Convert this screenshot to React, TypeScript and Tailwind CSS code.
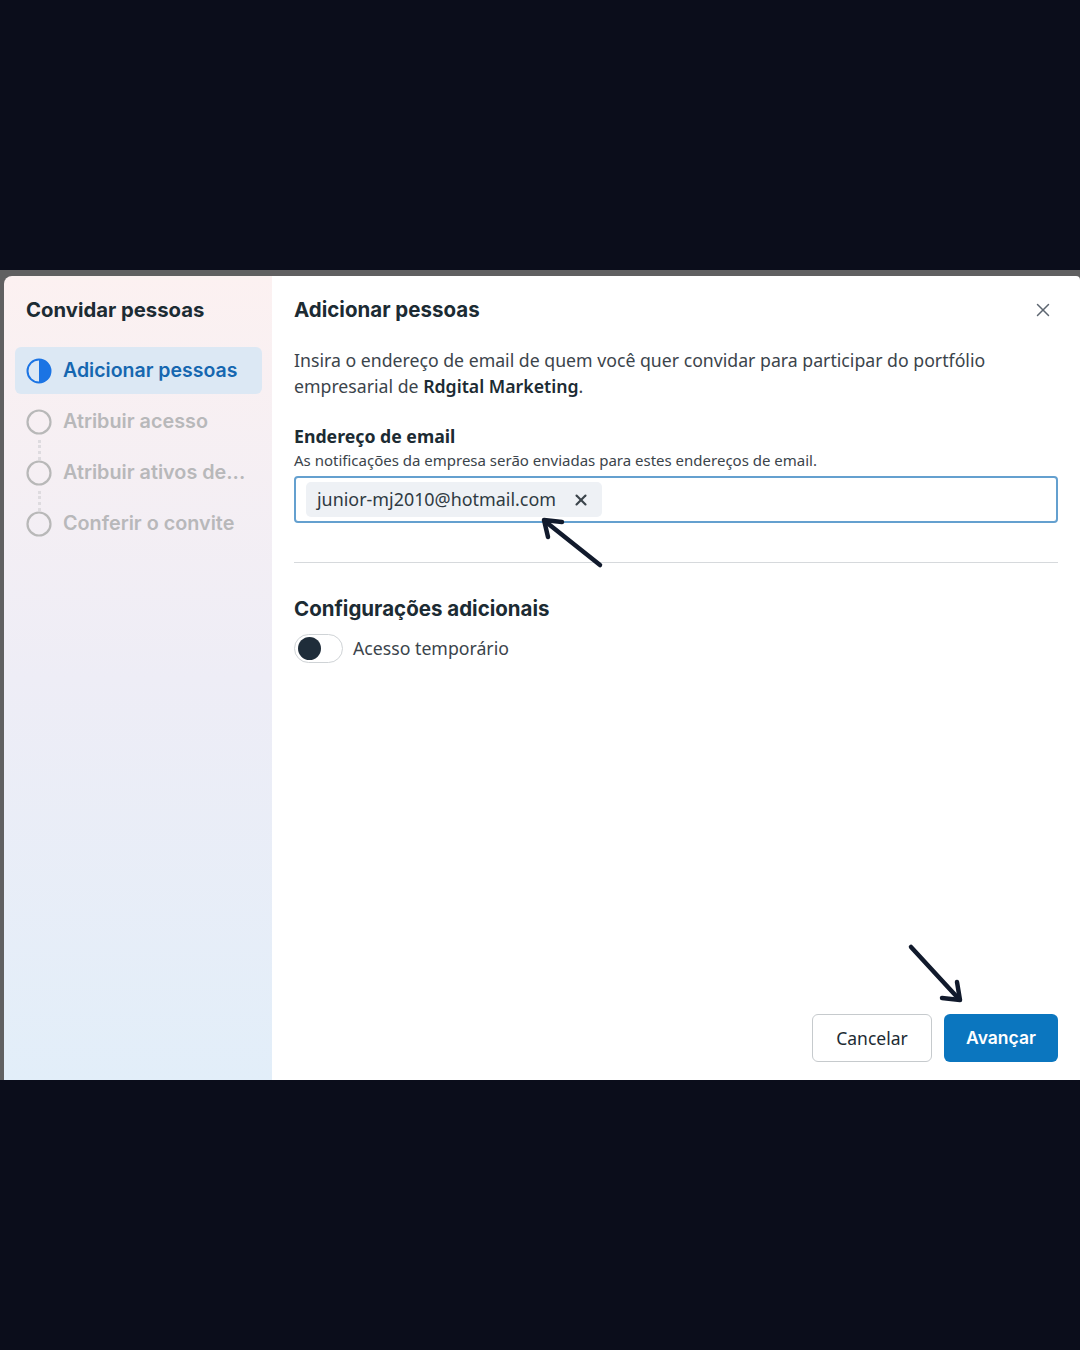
import { X } from "lucide-react"

const steps = [
  { label: "Adicionar pessoas", active: true },
  { label: "Atribuir acesso", active: false },
  { label: "Atribuir ativos de...", active: false },
  { label: "Conferir o convite", active: false },
]

const HalfCircle = () => (
  <svg width="26" height="26" viewBox="0 0 26 26" className="shrink-0">
    <circle cx="13" cy="13" r="11.5" fill="none" stroke="#1b74e4" strokeWidth="2" />
    <path d="M13 1.5 A11.5 11.5 0 0 1 13 24.5 Z" fill="#1b74e4" />
  </svg>
)

const EmptyCircle = () => (
  <svg width="26" height="26" viewBox="0 0 26 26" className="shrink-0">
    <circle cx="13" cy="13" r="11.5" fill="none" stroke="#b8b8b8" strokeWidth="2.2" />
  </svg>
)

const Arrows = () => (
  <svg
    className="absolute left-0 top-0 pointer-events-none"
    width="1080"
    height="1350"
    viewBox="0 0 1080 1350"
  >
    <g stroke="#111a2c" strokeWidth="4.5" strokeLinecap="round" fill="none" strokeLinejoin="round">
      <path d="M600 565 L546 522" />
      <path d="M562 522 L544 520 L548 537" />
      <path d="M911 947 L958 998" />
      <path d="M957 982 L960 1000 L942 998" />
    </g>
  </svg>
)

export default function App() {
  return (
    <div
      className="relative w-[1080px] h-[1350px] bg-[#0b0d1b] flex flex-col"
      style={{ fontFamily: '"Noto Sans", "Open Sans", sans-serif' }}
    >
      <div className="h-[270px] shrink-0" />
      <div className="h-[810px] shrink-0 bg-[#606061] pt-[6px] pl-[4px] overflow-hidden">
        <div className="flex h-[804px] rounded-tl-[8px] rounded-tr-[4px] overflow-hidden">
          {/* sidebar */}
          <aside className="w-[268px] shrink-0 bg-gradient-to-b from-[#fcf1f1] via-[#eeedf6] to-[#e2eef9] pt-[21px] pl-[11px] pr-[10px]">
            <h2 className="pl-[11px] text-[20.3px] leading-[26px] font-bold text-[#1c2b33] font-['Inter']">
              Convidar pessoas
            </h2>
            <ul className="mt-[24px] flex flex-col gap-[4px] font-['Inter']">
              {steps.map((s, i) => (
                <li
                  key={s.label}
                  className={
                    s.active
                      ? "relative h-[47px] flex items-center gap-[11px] pl-[11px] rounded-[6px] bg-[#dce8f4]"
                      : "relative h-[47px] flex items-center gap-[11px] pl-[11px]"
                  }
                >
                  {i > 1 && (
                    <span className="absolute left-[23px] -top-[9px] h-[20px] border-l-[3px] border-dotted border-[#dedbdf]" />
                  )}
                  {s.active ? <HalfCircle /> : <EmptyCircle />}
                  <span
                    className={
                      s.active
                        ? "text-[19.5px] font-semibold text-[#1667b0] whitespace-nowrap"
                        : "text-[19.8px] font-semibold text-[#b8b8ba] whitespace-nowrap"
                    }
                  >
                    {s.label}
                  </span>
                </li>
              ))}
            </ul>
          </aside>

          {/* main */}
          <main className="flex-1 bg-white flex flex-col pl-[22px] pr-[22px] pt-[21px] pb-[18px]">
            <div className="flex items-center justify-between h-[26px]">
              <h1 className="text-[20.5px] font-bold text-[#1c2b33] font-['Inter']">Adicionar pessoas</h1>
              <X className="w-[22px] h-[22px] mr-[4px] text-[#5d6670]" strokeWidth={1.6} />
            </div>

            <p className="mt-[24px] text-[17.7px] leading-[26px] text-[#3b444b]">
              Insira o endereço de email de quem você quer convidar para participar do portfólio
              <br />
              empresarial de <span className="font-semibold text-[#1c2b33]">Rdgital Marketing</span>.
            </p>

            <h3 className="mt-[25px] text-[17.7px] leading-[24px] font-bold text-[#1c2b33]">Endereço de email</h3>
            <p className="mt-[2px] text-[15px] leading-[20px] text-[#3b444b]">
              As notificações da empresa serão enviadas para estes endereços de email.
            </p>

            <div className="mt-[6px] h-[47px] rounded-[4px] border-2 border-[#64a0cf] flex items-center pl-[10px]">
              <div className="h-[35px] flex items-center gap-[16px] pl-[11px] pr-[12px] rounded-[5px] bg-[#eef1f5]">
                <span className="text-[17.9px] text-[#2f3a42]">junior-mj2010@hotmail.com</span>
                <X className="w-[18px] h-[18px] text-[#3b444b]" strokeWidth={2.8} />
              </div>
            </div>

            <div className="mt-[39px] h-px bg-[#d6d9dc]" />

            <h3 className="mt-[33px] text-[20.5px] leading-[26px] font-bold text-[#1c2b33] font-['Inter']">
              Configurações adicionais
            </h3>
            <div className="mt-[12px] flex items-center gap-[10px]">
              <div className="w-[49px] h-[29px] rounded-full border border-[#cfd3d6] bg-white flex items-center pl-[3px]">
                <span className="w-[23px] h-[23px] rounded-full bg-[#1f2d3a]" />
              </div>
              <span className="text-[17.7px] text-[#3b444b]">Acesso temporário</span>
            </div>

            <div className="mt-auto flex justify-end gap-[12px]">
              <button className="w-[120px] h-[48px] rounded-[6px] border border-[#c6cacd] bg-white text-[17.5px] text-[#1c2b33]">
                Cancelar
              </button>
              <button className="w-[114px] h-[48px] rounded-[6px] bg-[#0b76bf] text-[17.5px] font-semibold text-white font-['Inter']">
                Avançar
              </button>
            </div>
          </main>
        </div>
      </div>
      <div className="flex-1" />
      <Arrows />
    </div>
  )
}
